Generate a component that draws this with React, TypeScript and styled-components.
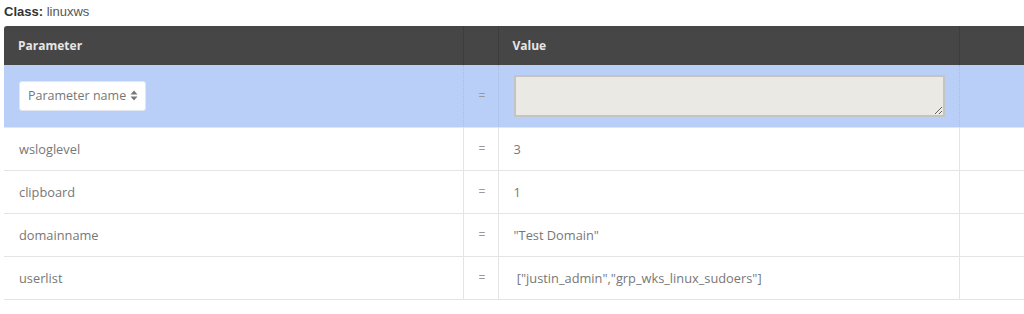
import React from 'react';
import styled, { createGlobalStyle } from 'styled-components';

const GlobalStyle = createGlobalStyle`
  html, body {
    margin: 0;
    padding: 0;
    background: #fff;
  }
`;

const Page = styled.div`
  padding: 4px 0 0 4px;
  font-family: 'Open Sans', 'Liberation Sans', sans-serif;
`;

const ClassLabel = styled.div`
  font-family: 'Liberation Sans', Arial, sans-serif;
  font-size: 13px;
  line-height: 15px;
  color: #555;
  height: 22px;

  b {
    color: #333;
  }
`;

const Table = styled.table`
  width: 1020px;
  border-collapse: collapse;
  table-layout: fixed;
  font-size: 12.8px;
  color: #777;
`;

const HeadCell = styled.th<{ $w?: number }>`
  box-sizing: border-box;
  width: ${(p) => (p.$w ? `${p.$w}px` : 'auto')};
  height: 39px;
  background: #464646;
  color: #e6e6e6;
  font-weight: 700;
  font-size: 12px;
  text-align: left;
  padding: 0 14px;
  border-left: 1px solid #3c3c3c;
  &:first-child {
    border-left: none;
    border-top-left-radius: 3px;
  }
`;

const Row = styled.tr<{ $active?: boolean }>`
  background: ${(p) => (p.$active ? '#b9cff8' : '#fff')};
  border-bottom: 1px solid ${(p) => (p.$active ? '#dfe6f2' : '#e4e4e4')};
`;

const Cell = styled.td<{ $eq?: boolean; $active?: boolean }>`
  box-sizing: border-box;
  height: ${(p) => (p.$active ? '62px' : '43px')};
  padding: 0 15px;
  text-align: ${(p) => (p.$eq ? 'center' : 'left')};
  color: ${(p) => (p.$eq ? '#999' : '#777')};
  font-size: ${(p) => (p.$eq ? '12px' : '12.8px')};
  white-space: pre;
  border-left: 1px ${(p) => (p.$active ? 'dotted #a9bde3' : 'solid #e4e4e4')};
  &:first-child {
    border-left: none;
  }
`;

const Select = styled.div`
  display: inline-flex;
  align-items: center;
  justify-content: space-between;
  box-sizing: border-box;
  width: 127px;
  height: 30px;
  padding: 0 7px 0 8px;
  background: #fff;
  border-radius: 3px;
  border: 1px solid #e3e8f0;
  color: #777;
  font-size: 12.5px;
  white-space: nowrap;
`;

const TextArea = styled.textarea`
  display: block;
  box-sizing: border-box;
  width: 431px;
  height: 42px;
  margin-top: 1px;
  background: #eae9e3;
  border: 2px solid #c4c4c2;
  border-radius: 0;
  outline: none;
  resize: both;
`;

const Arrows = () => (
  <svg width="8" height="11" viewBox="0 0 8 11">
    <path d="M4 0.5 L7.5 4.5 H0.5 Z" fill="#777" />
    <path d="M4 10.5 L7.5 6.5 H0.5 Z" fill="#777" />
  </svg>
);

const params = [
  { name: 'wsloglevel', value: '3' },
  { name: 'clipboard', value: '1' },
  { name: 'domainname', value: '"Test Domain"' },
  { name: 'userlist', value: ' ["justin_admin","grp_wks_linux_sudoers"]' },
];

export default function App() {
  return (
    <Page>
      <GlobalStyle />
      <ClassLabel>
        <b>Class:</b> linuxws
      </ClassLabel>
      <Table>
        <thead>
          <tr>
            <HeadCell $w={459}>Parameter</HeadCell>
            <HeadCell $w={35}></HeadCell>
            <HeadCell $w={461}>Value</HeadCell>
            <HeadCell></HeadCell>
          </tr>
        </thead>
        <tbody>
          <Row $active>
            <Cell $active>
              <Select>
                Parameter name <Arrows />
              </Select>
            </Cell>
            <Cell $active $eq>=</Cell>
            <Cell $active>
              <TextArea />
            </Cell>
            <Cell $active />
          </Row>
          {params.map((p) => (
            <Row key={p.name}>
              <Cell>{p.name}</Cell>
              <Cell $eq>=</Cell>
              <Cell>{p.value}</Cell>
              <Cell />
            </Row>
          ))}
        </tbody>
      </Table>
    </Page>
  );
}
